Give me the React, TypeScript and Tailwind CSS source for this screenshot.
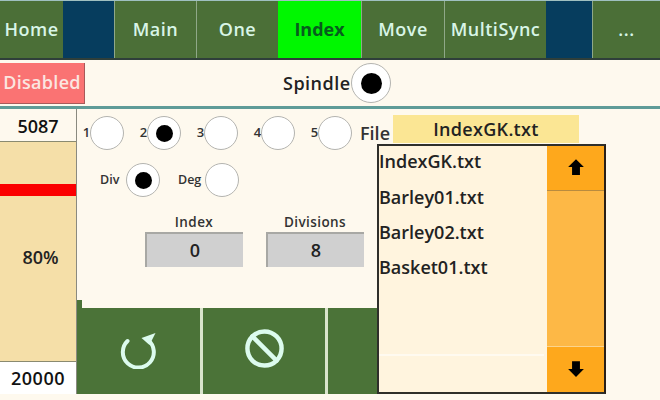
import { Ban } from 'lucide-react';

const TABS_LEFT = ['Main', 'One'];

function NavButton({ label, className = '' }: { label: string; className?: string }) {
  return (
    <div
      className={`h-full flex items-center justify-center bg-[#4b6f37] border-l border-[#8fa888] text-[#d8f5e6] text-[18px] font-semibold tracking-[0.5px] ${className}`}
    >
      {label}
    </div>
  );
}

function Radio({ on = false, size = 34 }: { on?: boolean; size?: number }) {
  return (
    <div
      className={`shrink-0 rounded-full bg-white border border-[#b4b4b0] flex items-center justify-center ${
        size === 40 ? 'w-[40px] h-[40px]' : 'w-[34px] h-[34px]'
      }`}
    >
      {on && <div className={`rounded-full bg-black ${size === 40 ? 'w-[21px] h-[21px]' : 'w-[17px] h-[17px]'}`} />}
    </div>
  );
}

function ValueBox({ title, value }: { title: string; value: string }) {
  return (
    <div className="w-[98px] flex flex-col items-center">
      <div className="h-[20px] text-[13.5px] font-semibold text-[#333] tracking-[0.4px] leading-[20px]">{title}</div>
      <div className="w-full h-[35px] bg-[#d0d0d0] border-t-2 border-l-2 border-[#a8a8a4] flex items-center justify-center text-[18px] font-semibold text-[#222]">
        {value}
      </div>
    </div>
  );
}

function ActionButton({ children, className = '' }: { children?: React.ReactNode; className?: string }) {
  return (
    <div className={`h-full flex items-center justify-center pb-[6px] bg-[#4b7338] ${className}`}>{children}</div>
  );
}

export default function App() {
  return (
    <div
      className="w-[660px] h-[400px] relative overflow-hidden bg-[#fef9ee] flex flex-col"
      style={{ fontFamily: '"Open Sans", "Liberation Sans", sans-serif' }}
    >
      {/* top nav */}
      <div className="h-[60px] shrink-0 flex bg-[#063d5e] border-t border-[#9fc0c0] border-b-2 border-b-[#2f3f3a]">
        <NavButton label="Home" className="w-[63px] border-l-0" />
        <div className="w-[51px]" />
        {TABS_LEFT.map((t) => (
          <NavButton key={t} label={t} className="w-[82px]" />
        ))}
        <div className="w-[83px] h-full flex items-center justify-center bg-[#00f700] text-[#075c1e] text-[18px] font-bold">
          Index
        </div>
        <NavButton label="Move" className="w-[83px]" />
        <NavButton label="MultiSync" className="w-[102px]" />
        <div className="w-[46px]" />
        <NavButton label="..." className="w-[68px]" />
      </div>

      {/* spindle row */}
      <div className="h-[46px] shrink-0 flex items-center">
        <div className="w-[85px] h-[41px] bg-[#fa7373] border-r border-b border-[#a85a5a] flex items-center justify-center text-[#fbe6e0] text-[18px] font-semibold tracking-[0.3px]">
          Disabled
        </div>
        <div className="flex-1 flex items-center pl-[198px]">
          <span className="w-[68px] text-[18px] font-semibold text-[#222] tracking-[0.5px]">Spindle</span>
          <Radio on size={40} />
        </div>
      </div>
      <div className="h-[3px] shrink-0 bg-[#5f9c98]" />

      {/* body */}
      <div className="h-[285px] shrink-0 flex">
        <div className="w-[77px] shrink-0 flex flex-col border-r border-[#8a8a80]">
          <div className="h-[33px] shrink-0 flex items-center justify-center pt-[2px] border-b border-[#8a8a70] text-[18px] font-semibold text-[#111] bg-[#fef9ee]">
            5087
          </div>
          <div className="flex-1 bg-[#f5dfa8] flex flex-col">
            <div className="h-[42px]" />
            <div className="h-[12px] bg-[#fb0000]" />
            <div className="flex-1 flex items-center justify-center pl-[5px] pb-[42px] text-[18px] font-semibold text-[#222]">
              80%
            </div>
          </div>
          <div className="h-[33px] shrink-0 flex items-center justify-center bg-white border-t border-[#8a8a70] text-[18px] font-semibold text-[#111] tracking-[0.5px]">
            20000
          </div>
        </div>

        <div className="flex-1 flex flex-col">
          {/* spindle number radios and file */}
          <div className="h-[40px] shrink-0 pt-[6px] flex items-start">
            <div className="flex items-center pl-[5px] h-[34px] mt-[1px]">
              {['1', '2', '3', '4', '5'].map((n) => (
                <div key={n} className="w-[57px] flex items-center text-[13px] font-semibold text-[#333]">
                  <span className="w-[9px] mr-[-1px] text-center">{n}</span>
                  <Radio on={n === '2'} />
                </div>
              ))}
              <span className="ml-[-7px] w-[33px] text-[18px] font-semibold text-[#333]">File</span>
            </div>
            <div className="w-[186px] h-[28px] bg-[#fbe694] flex items-center justify-center text-[18px] font-semibold text-[#222] tracking-[0.3px]">
              IndexGK.txt
            </div>
          </div>

          {/* Div and Deg */}
          <div className="h-[40px] shrink-0 mt-[11px] flex items-center pl-[23px] text-[12.5px] font-semibold text-[#333]">
            <span className="w-[26px]">Div</span>
            <Radio on />
            <span className="ml-[18px] w-[27px]">Deg</span>
            <Radio />
          </div>

          {/* index and divisions */}
          <div className="h-[55px] shrink-0 mt-[12px] pl-[68px] flex gap-[23px]">
            <ValueBox title="Index" value="0" />
            <ValueBox title="Divisions" value="8" />
          </div>

          <div className="h-[41px] shrink-0 relative">
            <div className="absolute left-0 bottom-0 w-[5px] h-[8px] bg-[#4b7338]" />
          </div>

          {/* action buttons */}
          <div className="h-[86px] w-[300px] shrink-0 flex gap-[3px] bg-[#d9e4cc]">
            <ActionButton className="w-[123px]">
              <svg width="40" height="42" viewBox="0 0 40 42" fill="none">
                <path d="M8.5 14 A 15.5 15.5 0 1 0 29 13" stroke="#dcfbee" strokeWidth="4" strokeLinecap="round" />
                <path d="M22.5 11 L36.5 6 L30.5 18 Z" fill="#dcfbee" />
              </svg>
            </ActionButton>
            <ActionButton className="w-[122px]">
              <Ban size={41} color="#dcfbee" strokeWidth={2.6} />
            </ActionButton>
            <ActionButton className="flex-1" />
          </div>
        </div>
      </div>

      {/* file list, open over the page */}
      <div className="absolute left-[377px] top-[144px] w-[229px] h-[250px] flex border-2 border-[#2f2f2b] border-r-[#2a2018] bg-[#fff4de]">
        <div className="flex-1 flex flex-col">
          <div className="h-[210px] pb-[4px] text-[18px] font-semibold text-[#222] border-b-2 border-[#fffaf0] mr-[3px]">
            {['IndexGK.txt', 'Barley01.txt', 'Barley02.txt', 'Basket01.txt'].map((f) => (
              <div key={f} className="h-[35.4px] flex items-center pb-[4px]">
                {f}
              </div>
            ))}
          </div>
        </div>
        <div className="w-[57px] shrink-0 flex flex-col bg-[#fdb846]">
          <div className="h-[45px] shrink-0 flex items-center justify-center pb-[2px] bg-[#fea81c] border-b border-[#b98b3f]">
            <svg width="18" height="18" viewBox="0 0 16 16">
              <path d="M8 1 L15 8 H11.5 V15 H4.5 V8 H1 Z" fill="#000" />
            </svg>
          </div>
          <div className="flex-1" />
          <div className="h-[46px] shrink-0 flex items-center justify-center pb-[2px] bg-[#fea81c] border-t border-[#fcd48c]">
            <svg width="18" height="18" viewBox="0 0 16 16">
              <path d="M8 15 L1 8 H4.5 V1 H11.5 V8 H15 Z" fill="#000" />
            </svg>
          </div>
        </div>
      </div>
    </div>
  );
}
